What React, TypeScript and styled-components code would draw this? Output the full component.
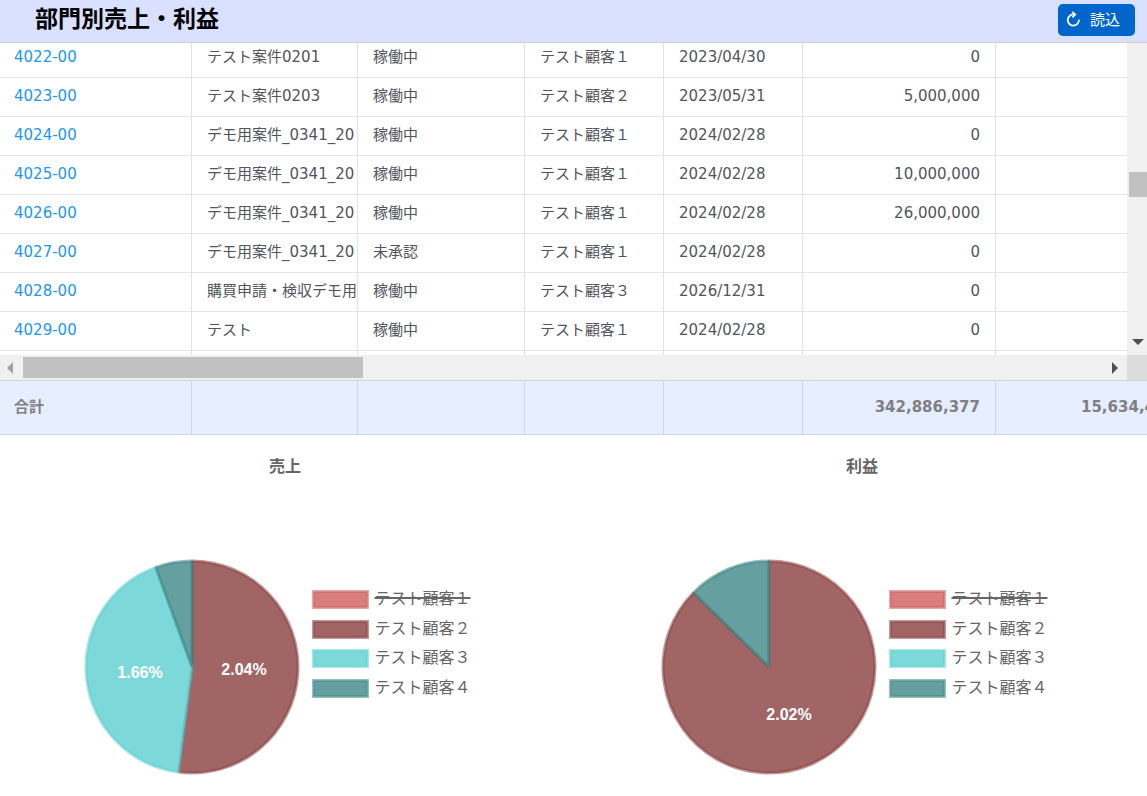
import React, { useLayoutEffect, useRef } from 'react';
import styled, { createGlobalStyle } from 'styled-components';

const GlobalStyle = createGlobalStyle`
  *, *::before, *::after { box-sizing: border-box; }
  body {
    margin: 0;
    background: #fff;
    color: #50565c;
    font-family: 'DejaVu Sans', 'Noto Sans CJK JP', sans-serif;
    font-size: 15px;
    line-height: 20px;
    overflow-x: hidden;
  }
`;

type Align = 'left' | 'right';

const Header = styled.header`
  display: flex;
  align-items: flex-start;
  justify-content: space-between;
  height: 43px;
  padding: 4px 12px 0 35px;
  background: #dae0ff;
  border-bottom: 1px solid #cfcfd4;
`;

const Title = styled.h1`
  margin: 0;
  color: #000;
  font-family: 'Noto Sans CJK JP', sans-serif;
  font-size: 23px;
  font-weight: 700;
  line-height: 26px;
`;

const LoadButton = styled.button`
  display: flex;
  align-items: center;
  gap: 8px;
  height: 32px;
  padding: 0 15px 2px 8px;
  border: 0;
  border-radius: 5px;
  background: #0066cc;
  color: #fff;
  font-family: 'Noto Sans CJK JP', sans-serif;
  font-size: 15px;
  line-height: 20px;
  cursor: pointer;
`;

const Grid = styled.div`
  display: grid;
  grid-template-columns: minmax(0, 1fr) 20px;
`;

const Viewport = styled.div`
  height: 312px;
  overflow: hidden;
`;

const Table = styled.table`
  width: 100%;
  border-collapse: separate;
  border-spacing: 0;
  table-layout: fixed;
`;

const Cell = styled.td<{ $align?: Align }>`
  height: 39px;
  padding: 0 15px 2px;
  border-right: 1px solid #e2e2e2;
  border-bottom: 1px solid #e6e6e6;
  text-align: ${(p) => p.$align ?? 'left'};
  white-space: nowrap;
  overflow: hidden;

  &:first-child { padding-left: 14px; }
  &:last-child { border-right: 0; }
`;

const ClippedText = styled.div`
  margin-right: -15px;
  overflow: hidden;
`;

const CodeLink = styled.a`
  color: #2196f3;
  text-decoration: none;
`;

const VTrack = styled.div`
  display: flex;
  flex-direction: column;
  justify-content: space-between;
  align-items: center;
  padding: 129px 0 10px 2px;
  background: #f0f0f0;
`;

const VThumb = styled.div`
  align-self: stretch;
  height: 25px;
  background: #c1c1c1;
`;

const HTrack = styled.div`
  display: flex;
  align-items: center;
  height: 25px;
  padding: 0 9px 0 7px;
  background: #f0f0f0;
`;

const HThumb = styled.div`
  width: 340px;
  height: 21px;
  margin: 0 auto 0 10px;
  background: #c1c1c1;
`;

const Corner = styled.div`
  background: #dcdcdc;
`;

const Arrow = styled.svg`
  display: block;
  flex: none;
`;

const TotalBar = styled.div`
  overflow: hidden;
  border-top: 1px solid #d3d5da;
  background: #e6eeff;
`;

const TotalCell = styled.td<{ $align?: Align }>`
  height: 54px;
  padding: 0 15px 2px;
  border-right: 1px solid #d3d5da;
  border-bottom: 1px solid #d3d5da;
  color: #808080;
  font-weight: 700;
  text-align: ${(p) => p.$align ?? 'left'};
  white-space: nowrap;

  &:first-child { padding-left: 14px; }
  &:last-child { padding: 0 0 2px 85px; border-right: 0; }
`;

const Charts = styled.main`
  display: grid;
  grid-template-columns: 1fr 1fr;
  gap: 7px;
`;

const Chart = styled.section`
  display: flex;
  flex-direction: column;
  align-items: center;
  gap: 84px;
  padding-top: 20px;
`;

const ChartTitle = styled.h2`
  margin: 0;
  color: #666;
  font-family: 'Noto Sans CJK JP', sans-serif;
  font-size: 16px;
  font-weight: 700;
  line-height: 20px;
`;

const ChartBody = styled.div`
  display: flex;
  align-items: flex-start;
  gap: 12px;
  padding-right: 15px;
`;

const PieLabel = styled.text`
  fill: #fff;
  font-family: 'Liberation Sans', Arial, sans-serif;
  font-size: 16px;
  font-weight: 700;
  text-anchor: middle;
  dominant-baseline: central;
`;

const Legend = styled.ul`
  display: flex;
  flex-direction: column;
  justify-content: space-between;
  height: 108px;
  margin: 31px 0 0;
  padding: 0;
  list-style: none;
`;

const LegendButton = styled.button<{ $off: boolean }>`
  display: flex;
  align-items: flex-start;
  gap: 5px;
  height: 19px;
  padding: 0;
  border: 0;
  background: none;
  color: #666;
  font-family: 'Noto Sans CJK JP', sans-serif;
  font-size: 16px;
  line-height: 15px;
  white-space: nowrap;
  text-decoration: ${(p) => (p.$off ? 'line-through 2px' : 'none')};
  cursor: pointer;
`;

const palette = {
  red: '207, 92, 92',
  brown: '137, 63, 63',
  cyan: '92, 207, 207',
  teal: '64, 135, 135',
};

type Tone = keyof typeof palette;

const fillOf = (tone: Tone) => `rgba(${palette[tone]}, 0.8)`;
const strokeOf = (tone: Tone) => `rgba(${palette[tone]}, 0.55)`;

const customers: { name: string; tone: Tone; off: boolean }[] = [
  { name: 'テスト顧客１', tone: 'red', off: true },
  { name: 'テスト顧客２', tone: 'brown', off: false },
  { name: 'テスト顧客３', tone: 'cyan', off: false },
  { name: 'テスト顧客４', tone: 'teal', off: false },
];

type Slice = { tone: Tone; from: number; to: number; label?: string };

const charts: { title: string; slices: Slice[] }[] = [
  {
    title: '売上',
    slices: [
      { tone: 'brown', from: 0, to: 187.4, label: '2.04%' },
      { tone: 'cyan', from: 187.4, to: 340, label: '1.66%' },
      { tone: 'teal', from: 340, to: 360 },
    ],
  },
  {
    title: '利益',
    slices: [
      { tone: 'brown', from: 0, to: 314.5, label: '2.02%' },
      { tone: 'teal', from: 314.5, to: 360 },
    ],
  },
];

const CENTER = 108;
const RADIUS = 106;

const pointAt = (deg: number, r: number) => {
  const a = ((deg - 90) * Math.PI) / 180;
  return [CENTER + r * Math.cos(a), CENTER + r * Math.sin(a)];
};

const slicePath = ({ from, to }: Slice) => {
  const [x1, y1] = pointAt(from, RADIUS);
  const [x2, y2] = pointAt(to, RADIUS);
  const large = to - from > 180 ? 1 : 0;
  return `M${CENTER} ${CENTER}L${x1} ${y1}A${RADIUS} ${RADIUS} 0 ${large} 1 ${x2} ${y2}Z`;
};

function Pie({ title, slices }: { title: string; slices: Slice[] }) {
  return (
    <svg width="216" height="216" viewBox="0 0 216 216" role="img" aria-label={title}>
      {slices.map((s) => (
        <path
          key={s.tone}
          d={slicePath(s)}
          fill={fillOf(s.tone)}
          stroke={strokeOf(s.tone)}
          strokeWidth="3"
          strokeLinejoin="bevel"
        />
      ))}
      {slices.map((s) => {
        if (!s.label) return null;
        const [x, y] = pointAt((s.from + s.to) / 2, 52);
        return (
          <PieLabel key={s.tone} x={Math.round(x)} y={Math.round(y) - 1}>
            {s.label}
          </PieLabel>
        );
      })}
    </svg>
  );
}

const rows = [
  ['4022-00', 'テスト案件0201', '稼働中', 'テスト顧客１', '2023/04/30', '0'],
  ['4023-00', 'テスト案件0203', '稼働中', 'テスト顧客２', '2023/05/31', '5,000,000'],
  ['4024-00', 'デモ用案件_0341_20', '稼働中', 'テスト顧客１', '2024/02/28', '0'],
  ['4025-00', 'デモ用案件_0341_20', '稼働中', 'テスト顧客１', '2024/02/28', '10,000,000'],
  ['4026-00', 'デモ用案件_0341_20', '稼働中', 'テスト顧客１', '2024/02/28', '26,000,000'],
  ['4027-00', 'デモ用案件_0341_20', '未承認', 'テスト顧客１', '2024/02/28', '0'],
  ['4028-00', '購買申請・検収デモ用', '稼働中', 'テスト顧客３', '2026/12/31', '0'],
  ['4029-00', 'テスト', '稼働中', 'テスト顧客１', '2024/02/28', '0'],
  ['', '', '', '', '', ''],
];

function Columns() {
  return (
    <colgroup>
      <col style={{ width: 192 }} />
      <col style={{ width: 166 }} />
      <col style={{ width: 167 }} />
      <col style={{ width: 139 }} />
      <col style={{ width: 139 }} />
      <col style={{ width: 193 }} />
      <col />
    </colgroup>
  );
}

export default function App() {
  const viewport = useRef<HTMLDivElement>(null);

  useLayoutEffect(() => {
    if (viewport.current) viewport.current.scrollTop = 4;
  }, []);

  return (
    <>
      <GlobalStyle />
      <Header>
        <Title>部門別売上・利益</Title>
        <LoadButton type="button">
          <svg width="16" height="16" viewBox="0 0 16 16" fill="none" stroke="#fff" strokeWidth="1.8" aria-hidden="true">
            <path d="M8.6 3.6A5.6 5.6 0 1 0 12.9 8.6" />
            <path d="M6.4 0.8L9.2 3.6L6.4 6.4" />
          </svg>
          読込
        </LoadButton>
      </Header>
      <Grid>
        <Viewport ref={viewport}>
          <Table>
            <Columns />
            <tbody>
              {rows.map(([code, name, status, customer, date, amount], i) => (
                <tr key={i}>
                  <Cell>
                    <CodeLink href="#">{code}</CodeLink>
                  </Cell>
                  <Cell>
                    <ClippedText>{name}</ClippedText>
                  </Cell>
                  <Cell>{status}</Cell>
                  <Cell>{customer}</Cell>
                  <Cell>{date}</Cell>
                  <Cell $align="right">{amount}</Cell>
                  <Cell />
                </tr>
              ))}
            </tbody>
          </Table>
        </Viewport>
        <VTrack>
          <VThumb />
          <Arrow width="12" height="6" viewBox="0 0 12 6" aria-hidden="true">
            <path d="M0 0H12L6 6Z" fill="#505050" />
          </Arrow>
        </VTrack>
        <HTrack>
          <Arrow width="6" height="12" viewBox="0 0 6 12" aria-hidden="true">
            <path d="M6 0V12L0 6Z" fill="#a3a3a3" />
          </Arrow>
          <HThumb />
          <Arrow width="6" height="12" viewBox="0 0 6 12" aria-hidden="true">
            <path d="M0 0V12L6 6Z" fill="#505050" />
          </Arrow>
        </HTrack>
        <Corner />
      </Grid>
      <TotalBar>
        <Table>
          <Columns />
          <tbody>
            <tr>
              <TotalCell>合計</TotalCell>
              <TotalCell />
              <TotalCell />
              <TotalCell />
              <TotalCell />
              <TotalCell $align="right">342,886,377</TotalCell>
              <TotalCell>15,634,4</TotalCell>
            </tr>
          </tbody>
        </Table>
      </TotalBar>
      <Charts>
        {charts.map((chart) => (
          <Chart key={chart.title}>
            <ChartTitle>{chart.title}</ChartTitle>
            <ChartBody>
              <Pie title={chart.title} slices={chart.slices} />
              <Legend>
                {customers.map((c) => (
                  <li key={c.name}>
                    <LegendButton type="button" $off={c.off} aria-pressed={!c.off}>
                      <svg width="57" height="19" viewBox="0 0 57 19" aria-hidden="true">
                        <rect
                          x="1.5"
                          y="1.5"
                          width="54"
                          height="16"
                          fill={fillOf(c.tone)}
                          stroke={strokeOf(c.tone)}
                          strokeWidth="3"
                        />
                      </svg>
                      {c.name}
                    </LegendButton>
                  </li>
                ))}
              </Legend>
            </ChartBody>
          </Chart>
        ))}
      </Charts>
    </>
  );
}
